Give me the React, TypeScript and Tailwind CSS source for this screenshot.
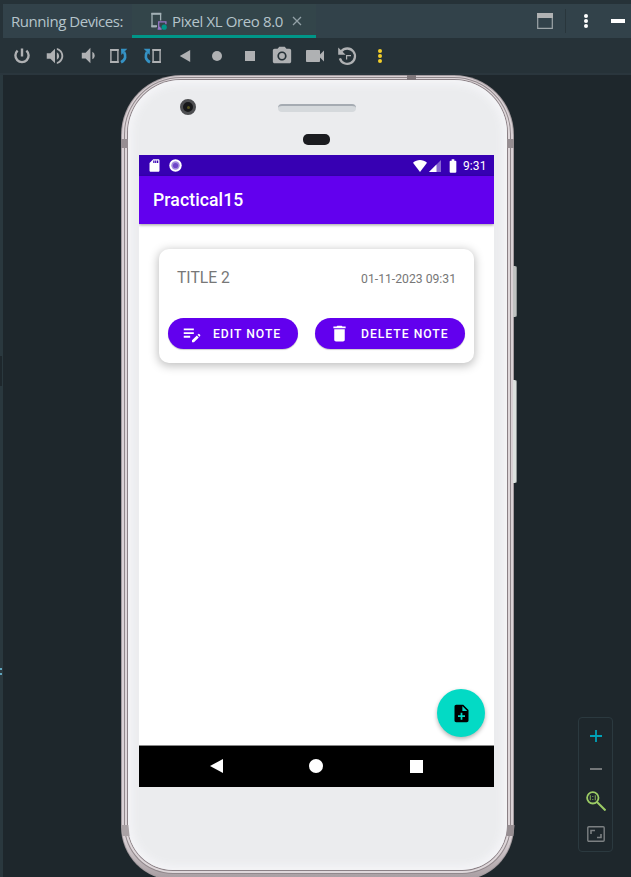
import React from "react";
import {
  MdBatteryFull,
  MdDelete,
  MdEditNote,
  MdNoteAdd,
  MdPhotoCamera,
  MdSdCard,
  MdVideocam,
  MdVolumeDown,
  MdVolumeUp,
} from "react-icons/md";

function DeviceIcon() {
  return (
    <svg className="ml-[18px] h-[20px] w-[18px] shrink-0" viewBox="0 0 18 20" fill="none">
      <path d="M6 15.5H2V2.5h8.6v7" stroke="#a3b1b6" strokeWidth="1.3" />
      <path d="M1.4 2h9.8v1.8H1.4zM1.4 14.2H7v2H1.4z" fill="#a3b1b6" />
      <path d="M10.5 16.5H8.7v-5.7h7.2v2.5M7.6 18h4" stroke="#9876c8" strokeWidth="1.3" />
      <circle cx="14.2" cy="16.2" r="2.6" fill="#009688" />
    </svg>
  );
}

function PowerIcon() {
  return (
    <svg className="h-5 w-5" viewBox="0 0 20 20" fill="none" stroke="#afb1b3" strokeWidth="2.4">
      <path d="M10 2.4v8.2M5.6 4.6a6.6 6.6 0 1 0 8.8 0" />
    </svg>
  );
}

function RotateIcon({ flip = false }: { flip?: boolean }) {
  return (
    <svg className={flip ? "h-5 w-5 -scale-x-100" : "h-5 w-5"} viewBox="0 0 20 20" fill="none">
      <path d="M1.9 3.8h7v12.4h-7z" stroke="#afb1b3" strokeWidth="1.4" />
      <path d="M1.2 3h8.4v2H1.2zM1.2 15h8.4v2H1.2z" fill="#afb1b3" />
      <path d="M12 16.3c5-2.6 5-7 3-10.3" stroke="#3592c4" strokeWidth="2.7" />
      <path d="M12 2.8h6.3l-6 6.1z" fill="#3592c4" />
    </svg>
  );
}

function HistoryIcon() {
  return (
    <svg className="h-5 w-5" viewBox="0 0 20 20" fill="none">
      <path d="M2.9 12.4A7.7 7.7 0 1 0 4.4 5.2" stroke="#afb1b3" strokeWidth="2.3" />
      <path d="M1.2 1.6v7.2h7.4z" fill="#afb1b3" />
      <path d="M9.6 13.4V9.6H14" stroke="#afb1b3" strokeWidth="1.2" />
    </svg>
  );
}

function Shape({ d }: { d: string }) {
  return (
    <svg className="h-5 w-5" viewBox="0 0 20 20" fill="currentColor">
      <path d={d} />
    </svg>
  );
}

function Dots({ className }: { className: string }) {
  return (
    <svg className={className} viewBox="0 0 6 16" fill="currentColor">
      <circle cx="3" cy="3" r="2" />
      <circle cx="3" cy="8" r="2" />
      <circle cx="3" cy="13" r="2" />
    </svg>
  );
}

function TabBar() {
  return (
    <header className="ml-[3px] flex h-[34px] items-center bg-[#32424a] text-[#b5c4ca]">
      <span className="ml-2 w-[121px] text-[15px] tracking-[-0.45px] whitespace-nowrap">Running Devices:</span>
      <div className="flex h-[34px] w-[183.5px] items-center border-b-[3.5px] border-[#009688] bg-[#33454a] pt-[3px]">
        <DeviceIcon />
        <span className="ml-1 w-[112px] text-[15px] tracking-[-0.38px] whitespace-nowrap">Pixel XL Oreo 8.0</span>
        <svg className="ml-[8px] h-[10px] w-[10px]" viewBox="0 0 10 10" stroke="#93a1a7" strokeWidth="1.3">
          <path d="M1 1l8 8M9 1l-8 8" />
        </svg>
      </div>
      <div className="ml-auto flex h-full items-center">
        <svg className="h-4 w-4" viewBox="0 0 16 16" fill="none">
          <path d="M.7.7h14.6v14.6H.7z" stroke="#9da5a8" strokeWidth="1.2" />
          <path d="M0 0h16v5H0z" fill="#b0b2b3" />
        </svg>
        <div className="ml-3 h-6 w-px bg-[#29363c]" />
        <Dots className="ml-[17px] h-4 w-[6px] text-white" />
        <div className="mr-[6px] ml-[22px] h-[4px] w-[14px] bg-white" />
      </div>
    </header>
  );
}

function Toolbar() {
  const items = [
    <PowerIcon />,
    <MdVolumeUp className="ml-[2px] h-[22px] w-[22px]" />,
    <MdVolumeDown className="ml-[3px] h-[23px] w-[23px]" />,
    <RotateIcon />,
    <RotateIcon flip />,
    <Shape d="M4.8 10l10.4-6v12z" />,
    <Shape d="M10 5a5 5 0 1 0 0 10a5 5 0 1 0 0-10z" />,
    <Shape d="M5 5h10v10H5z" />,
    <MdPhotoCamera className="h-[22px] w-[22px]" />,
    <MdVideocam className="h-6 w-6" />,
    <HistoryIcon />,
    <Dots className="h-4 w-[6px] text-[#f4cf2a]" />,
  ];
  return (
    <nav className="ml-[3px] flex h-[35px] items-center pl-[2.5px] text-[#afb1b3]">
      {items.map((icon, i) => (
        <div key={i} className="flex w-[32.55px] shrink-0 justify-center">
          {icon}
        </div>
      ))}
    </nav>
  );
}

function StatusBar() {
  return (
    <div className="flex h-[21px] shrink-0 items-center bg-[#3700b3] text-white">
      <MdSdCard className="ml-[8px] h-[15px] w-[15px]" />
      <svg className="ml-[7px] h-[13px] w-[13px]" viewBox="0 0 13 13">
        <circle cx="6.5" cy="6.5" r="6.2" fill="#fff" />
        <circle cx="6.5" cy="6.5" r="4.2" fill="#a38bdc" />
        <circle cx="6.5" cy="6.5" r="2.6" fill="#6f46c8" />
      </svg>
      <svg className="ml-auto h-3 w-[14px]" viewBox="0 0 14 12" fill="currentColor">
        <path d="M0 2.8C4-.9 10-.9 14 2.8L7 12z" />
      </svg>
      <svg className="ml-[2px] h-3 w-3" viewBox="0 0 12 12" fill="currentColor">
        <path d="M12 0v12H0z" opacity=".4" />
        <path d="M7.5 4.5V12H0z" />
      </svg>
      <MdBatteryFull className="ml-[4px] h-4 w-4" />
      <span className="mr-[7px] ml-[2px] w-[24px] text-[12px] tracking-[0.1px]">9:31</span>
    </div>
  );
}

function NoteCard() {
  return (
    <article className="mx-5 mt-[25px] h-[114px] rounded-[10px] bg-white px-[9px] pt-[18px] shadow-[0_2px_10px_1px_rgba(0,0,0,0.25)]">
      <div className="flex h-[22px] items-center justify-between px-[9px] text-[#777]">
        <h2 className="text-[15.7px]">TITLE 2</h2>
        <time className="pt-[2px] text-[12.2px]">01-11-2023 09:31</time>
      </div>
      <div className="mt-[29px] flex justify-between text-[12.2px] font-medium tracking-[0.98px] text-white">
        <button className="flex h-[31px] w-[130px] items-center rounded-full bg-[#6200ee] shadow-[0_1px_1px_rgba(0,0,0,0.2)]">
          <MdEditNote className="ml-[13px] h-[22px] w-[22px] shrink-0" />
          <span className="ml-[10px] pt-px whitespace-nowrap">EDIT NOTE</span>
        </button>
        <button className="flex h-[31px] w-[150px] items-center rounded-full bg-[#6200ee] shadow-[0_1px_1px_rgba(0,0,0,0.2)]">
          <MdDelete className="ml-[14px] h-[21px] w-[21px] shrink-0" />
          <span className="ml-[11px] pt-px whitespace-nowrap">DELETE NOTE</span>
        </button>
      </div>
    </article>
  );
}

function Screen() {
  return (
    <main className="flex h-[632px] w-[355px] flex-col overflow-hidden bg-white font-['Roboto',sans-serif]">
      <StatusBar />
      <div className="z-10 flex h-12 shrink-0 items-center bg-[#6200ee] pl-[14px] shadow-[0_1px_3px_rgba(0,0,0,0.4)]">
        <h1 className="pt-px text-[17.6px] font-medium tracking-[0.1px] text-white">Practical15</h1>
      </div>
      <section className="relative flex flex-1 flex-col">
        <NoteCard />
        <button className="absolute right-[9px] bottom-[8px] flex h-12 w-12 items-center justify-center rounded-full bg-[#03dac5] text-black shadow-[0_2px_4px_rgba(0,0,0,0.3)]">
          <MdNoteAdd className="h-[21px] w-[21px]" />
        </button>
      </section>
      <footer className="flex h-[42px] shrink-0 items-center border-t border-[#888] bg-black pb-px pl-[71px] text-white">
        <svg className="h-[14px] w-[13px]" viewBox="0 0 13 14" fill="currentColor">
          <path d="M0 7L13 0v14z" />
        </svg>
        <div className="ml-[86px] h-[14px] w-[14px] rounded-full bg-white" />
        <div className="ml-[87px] h-[13px] w-[13px] bg-white" />
      </footer>
    </main>
  );
}

function Phone() {
  return (
    <div className="relative h-[805px] w-[393px] shrink-0 rounded-t-[60px] rounded-b-[53px] bg-[#a39b9f] p-px">
      <div className="absolute top-[191px] -right-[3px] h-[51px] w-[4px] rounded-r-[2px] border-r border-[#8d9494] bg-[#bfc2c1]" />
      <div className="absolute top-[305px] -right-[3px] h-[103px] w-[4px] rounded-r-[2px] border-r border-[#8d9494] bg-[#dce1de]" />
      <div className="h-full rounded-t-[59px] rounded-b-[52px] bg-linear-to-b from-[#d9d1d5] from-95% to-[#a79da1] px-[2px] pt-px pb-[5px]">
        <div className="h-full rounded-t-[57px] rounded-b-[49px] bg-[#91888c] p-px">
          <div className="h-full rounded-t-[56px] rounded-b-[48px] bg-[#ded7da] px-[2px] pt-px pb-[2px]">
            <div className="h-full rounded-t-[54px] rounded-b-[46px] bg-[#8b8186] p-px">
              <div className="flex h-full flex-col items-start rounded-t-[53px] rounded-b-[45px] bg-[#ebecee] pt-[75px] pl-[11px] shadow-[inset_0_0_8px_4px_#f5f5f8]">
                <Screen />
              </div>
            </div>
          </div>
        </div>
      </div>
      <div className="absolute top-[64px] left-0 h-[9px] w-[7px] bg-[#968e92]" />
      <div className="absolute top-[64px] right-0 h-[9px] w-[7px] bg-[#968e92]" />
      <div className="absolute top-[750px] left-[0.5px] h-[11px] w-[7px] skew-x-6 bg-[#aaa2a5]" />
      <div className="absolute top-[750px] right-[0.5px] h-[11px] w-[7px] -skew-x-6 bg-[#968e92]" />
      <div className="absolute top-0 left-[286px] h-[5px] w-[9px] bg-[#7e767a]" />
      <div className="absolute top-[24px] left-[59px] flex h-4 w-4 items-center justify-center rounded-full border-[3px] border-[#4d4e51] bg-[#17181a]">
        <div className="h-[3px] w-[3px] rounded-full bg-[#55521f]" />
      </div>
      <div className="absolute top-[29px] left-[157px] h-2 w-[78px] rounded-full border-t-2 border-[#a5abb2] bg-[#d5d9dc]" />
      <div className="absolute top-[59px] left-[182px] h-[11px] w-[27px] rounded-[5px] bg-[#1b1c20]" />
    </div>
  );
}

function ZoomControls() {
  return (
    <aside className="absolute top-[642px] left-[575px] flex h-[135px] w-[35px] flex-col items-center rounded border border-[#2b393f]">
      <svg className="mt-3 h-3 w-3" viewBox="0 0 12 12" stroke="#00a2b8" strokeWidth="1.8">
        <path d="M6 0v12M0 6h12" />
      </svg>
      <div className="mt-[26px] h-[2px] w-3 bg-[#747779]" />
      <svg className="mt-[21px] h-5 w-5 shrink-0" viewBox="0 0 20 20" fill="none">
        <circle cx="6.8" cy="6.8" r="5.7" stroke="#9ccc65" strokeWidth="1.8" />
        <path d="M11 11l8.5 8.5" stroke="#9ccc65" strokeWidth="2" />
        <path d="M4.3 4.2v5M9.3 4.2v5M6.8 5v1M6.8 8v1" stroke="#7da452" strokeWidth="1.1" />
      </svg>
      <svg className="mt-[15px] h-4 w-[18px] shrink-0" viewBox="0 0 18 16" fill="none" stroke="#7c8082">
        <rect x=".8" y=".8" width="16.4" height="14.4" rx="1" strokeWidth="1.4" />
        <path d="M4 8V4.5h4M14 8v3.5h-4" strokeWidth="1.6" />
      </svg>
    </aside>
  );
}

export default function App() {
  return (
    <div className="flex h-[877px] w-[631px] flex-col overflow-hidden bg-[#263238] pt-1 font-['Open_Sans',sans-serif]">
      <TabBar />
      <Toolbar />
      <div className="h-[2px] shrink-0 bg-[#2a363d]" />
      <div className="relative flex h-[802px] shrink-0 border-l-[3px] border-[#2a383e] bg-[#1e272c] pl-[118px]">
        <Phone />
        <div className="absolute top-[281px] -left-[3px] h-[30px] w-[2px] bg-[#1e272c]" />
        <div className="absolute top-[593px] -left-[3px] h-[7px] w-[2px] border-y-2 border-[#61a5bd]" />
        <ZoomControls />
      </div>
    </div>
  );
}
